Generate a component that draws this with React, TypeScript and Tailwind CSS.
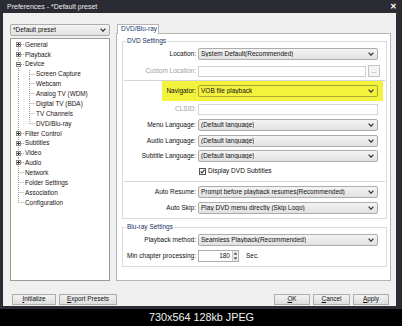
import React from 'react';

type Node = { label: string; kind: 'plus' | 'minus' | 'child' | 'lastchild' | 'leaf' | 'last' };

const tree: Node[] = [
  { label: 'General', kind: 'plus' },
  { label: 'Playback', kind: 'plus' },
  { label: 'Device', kind: 'minus' },
  { label: 'Screen Capture', kind: 'child' },
  { label: 'Webcam', kind: 'child' },
  { label: 'Analog TV (WDM)', kind: 'child' },
  { label: 'Digital TV (BDA)', kind: 'child' },
  { label: 'TV Channels', kind: 'child' },
  { label: 'DVD/Blu-ray', kind: 'lastchild' },
  { label: 'Filter Control', kind: 'plus' },
  { label: 'Subtitles', kind: 'plus' },
  { label: 'Video', kind: 'plus' },
  { label: 'Audio', kind: 'plus' },
  { label: 'Network', kind: 'leaf' },
  { label: 'Folder Settings', kind: 'leaf' },
  { label: 'Association', kind: 'leaf' },
  { label: 'Configuration', kind: 'last' },
];

const TreeGlyph = ({ kind, first }: { kind: Node['kind']; first: boolean }) => {
  const child = kind === 'child' || kind === 'lastchild';
  const box = kind === 'plus' || kind === 'minus';
  return (
    <svg width={child ? 24 : 13} height="10" className="shrink-0 overflow-visible">
      <g stroke="#a0a0a0" strokeWidth="1" strokeDasharray="1 1" fill="none">
        <line x1="6.5" y1={first ? 4.5 : 0} x2="6.5" y2={kind === 'last' ? 4.5 : 10} />
        {!child && <line x1={box ? 9 : 6.5} y1="4.5" x2="12" y2="4.5" />}
        {child && <line x1="17.5" y1="0" x2="17.5" y2={kind === 'lastchild' ? 4.5 : 10} />}
        {child && <line x1="17.5" y1="4.5" x2="23" y2="4.5" />}
      </g>
      {box && (
        <g>
          <rect x="4.5" y="2.5" width="4" height="4" fill="#fff" stroke="#8a8a8a" />
          <line x1="5" y1="4.5" x2="8" y2="4.5" stroke="#333" />
          {kind === 'plus' && <line x1="6.5" y1="3" x2="6.5" y2="6" stroke="#333" />}
        </g>
      )}
    </svg>
  );
};

const Chevron = () => (
  <svg width="6" height="4" viewBox="0 0 6 4" className="shrink-0">
    <path d="M0.6 0.6 L3 3.2 L5.4 0.6" stroke="#333" strokeWidth="1.2" fill="none" />
  </svg>
);

const Combo = ({ text, yellow = false, w = 'w-[180px]' }: { text: string; yellow?: boolean; w?: string }) => (
  <div
    className={`flex h-[12px] ${w} shrink-0 items-center justify-between rounded-[2px] border pl-[2px] pr-[3px] ${
      yellow ? 'border-[#a8a838] bg-[#f3f33e]' : 'border-[#acacac] bg-linear-to-b from-[#f4f4f4] to-[#e1e1e1]'
    }`}
  >
    <span className="truncate leading-none text-[#111]">{text}</span>
    <Chevron />
  </div>
);

const Row = ({ label, disabled = false, children }: { label: string; disabled?: boolean; children: React.ReactNode }) => (
  <div className="flex h-[12px] items-center">
    <div className={`w-[75px] shrink-0 whitespace-nowrap pr-[2px] text-right ${disabled ? 'text-[#a0a0a0]' : 'text-[#111]'}`}>
      <span className="float-right">{label}</span>
    </div>
    {children}
  </div>
);

const Group = ({ title, className = '', children }: { title: string; className?: string; children: React.ReactNode }) => (
  <div className={`relative ml-[5px] w-[265px] border border-[#d5dbe0] ${className}`}>
    <span className="absolute -top-[5px] left-[3px] bg-white px-[1px] leading-[8px] text-[#1c2d5c]">{title}</span>
    {children}
  </div>
);

const Btn = ({ w, first, rest }: { w: string; first: string; rest: string }) => (
  <div className={`flex h-[11px] ${w} items-center justify-center border border-[#acacac] bg-linear-to-b from-[#f2f2f2] to-[#dddddd] text-[6.4px] text-[#111]`}>
    <span className="leading-none">
      <span className="underline">{first}</span>
      {rest}
    </span>
  </div>
);

export default function App() {
  return (
    <div className="flex h-[326px] w-[402px] flex-col bg-black font-['Liberation_Sans',Arial,sans-serif] text-[6.5px]">
      <div className="flex h-[309px] flex-col bg-[#2b2b33]">
        <div className="flex h-[13px] items-center justify-between pl-[7px] pr-[5px] text-[7px] text-[#ececec]">
          <span className="leading-none">Preferences - *Default preset</span>
          <span className="text-[8px] font-bold leading-none text-white">✕</span>
        </div>
        <div className="ml-[3px] flex h-[293px] w-[393px] flex-col bg-[#f0f0f0]">
          <div className="flex pt-[11px]">
            <div className="ml-[7px] flex w-[100px] flex-col">
              <Combo text="*Default preset" w="w-[100px]" />
              <div className="mt-[2px] h-[243px] border border-[#9a9a9a] bg-white pt-[1px] pl-[1px]">
                {tree.map((n, i) => (
                  <div key={n.label} className="flex h-[9.875px] items-center">
                    <TreeGlyph kind={n.kind} first={i === 0} />
                    <span className="whitespace-nowrap text-[6.4px] leading-none text-[#241414]">{n.label}</span>
                  </div>
                ))}
              </div>
            </div>
            <div className="ml-[6px] flex w-[275px] flex-col">
              <div className="relative z-10 -mb-px ml-[1px] flex h-[10px] w-[42px] items-center border border-b-0 border-[#b5b5b5] bg-white pl-[3px] text-[#233a78]">
                <span className="leading-none">DVD/Blu-ray</span>
              </div>
              <div className="h-[248px] border border-[#b5b5b5] bg-white pt-[7px]">
                <Group title="DVD Settings" className="pb-[4px]">
                  <div className="mt-[6px]">
                    <Row label="Location:">
                      <Combo text="System Default(Recommended)" />
                    </Row>
                  </div>
                  <div className="mt-[5px]">
                    <Row label="Custom Location:" disabled>
                      <div className="h-[11px] w-[168px] border border-[#d0d0d0] bg-white" />
                      <div className="ml-[2px] flex h-[12px] w-[12px] items-end justify-center border border-[#c4c4c4] bg-[#f4f4f4] pb-[2px] text-[6px] leading-none text-[#555]">
                        ...
                      </div>
                    </Row>
                  </div>
                  <div className="mx-[1px] mt-[3px] h-px bg-[#d5d5d5]" />
                  <div className="ml-[39px] flex h-[20px] w-[221px] items-center bg-[#f3f33e] pr-[5px]">
                    <div className="w-[36px] shrink-0 pr-[2px] text-right text-[#111]">Navigator:</div>
                    <Combo text="VOB file playback" yellow />
                  </div>
                  <div className="mt-[2px]">
                    <Row label="CLSID:" disabled>
                      <div className="h-[11px] w-[180px] border border-[#d6d6d6] bg-white" />
                    </Row>
                  </div>
                  <div className="mt-[4px]">
                    <Row label="Menu Language:">
                      <Combo text="(Default language)" />
                    </Row>
                  </div>
                  <div className="mt-[4px]">
                    <Row label="Audio Language:">
                      <Combo text="(Default language)" />
                    </Row>
                  </div>
                  <div className="mt-[3px]">
                    <Row label="Subtitle Language:">
                      <Combo text="(Default language)" />
                    </Row>
                  </div>
                  <div className="mt-[3px] flex h-[12px] items-center pl-[76px]">
                    <svg width="7" height="7" viewBox="0 0 7 7" className="shrink-0">
                      <rect x="0.5" y="0.5" width="6" height="6" fill="#fff" stroke="#555" />
                      <path d="M1.6 3.4 L3 5 L5.5 1.8" stroke="#222" strokeWidth="1.1" fill="none" />
                    </svg>
                    <span className="ml-[2px] leading-none text-[#111]">Display DVD Subtitles</span>
                  </div>
                  <div className="mx-[1px] mt-[4px] h-px bg-[#d5d5d5]" />
                  <div className="mt-[4px]">
                    <Row label="Auto Resume:">
                      <Combo text="Prompt before playback resumes(Recommended)" />
                    </Row>
                  </div>
                  <div className="mt-[4px]">
                    <Row label="Auto Skip:">
                      <Combo text="Play DVD menu directly (Skip Logo)" />
                    </Row>
                  </div>
                </Group>
                <Group title="Blu-ray Settings" className="mt-[8px] pb-[4px]">
                  <div className="mt-[6px]">
                    <Row label="Playback method:">
                      <Combo text="Seamless Playback(Recommended)" />
                    </Row>
                  </div>
                  <div className="mt-[4px]">
                    <Row label="Min chapter processing:">
                      <div className="flex h-[12px] w-[41px] items-center border border-[#acacac] bg-white">
                        <span className="flex-1 pr-[2px] text-right leading-none text-[#111]">180</span>
                        <div className="flex h-full w-[6px] flex-col border-l border-[#c8c8c8] bg-[#eeeeee]">
                          <svg width="5" height="5" viewBox="0 0 5 5" className="flex-1">
                            <path d="M0.8 3.6 L2.5 1.4 L4.2 3.6 Z" fill="#222" />
                          </svg>
                          <svg width="5" height="5" viewBox="0 0 5 5" className="flex-1">
                            <path d="M0.8 1.4 L2.5 3.6 L4.2 1.4 Z" fill="#222" />
                          </svg>
                        </div>
                      </div>
                      <span className="ml-[7px] leading-none text-[#111]">Sec.</span>
                    </Row>
                  </div>
                </Group>
              </div>
            </div>
          </div>
          <div className="mt-[13px] flex items-center">
            <div className="ml-[9px] flex gap-[3px]">
              <Btn w="w-[44px]" first="I" rest="nitialize" />
              <Btn w="w-[58px]" first="E" rest="xport Presets" />
            </div>
            <div className="ml-auto mr-[7px] flex gap-[3px]">
              <Btn w="w-[36px]" first="O" rest="K" />
              <Btn w="w-[37px]" first="C" rest="ancel" />
              <Btn w="w-[36px]" first="A" rest="pply" />
            </div>
          </div>
        </div>
      </div>
      <div className="flex flex-1 items-center justify-center pl-[1px] text-[10.8px] leading-none text-[#f2f2f2]">
        730x564 128kb JPEG
      </div>
    </div>
  );
}
